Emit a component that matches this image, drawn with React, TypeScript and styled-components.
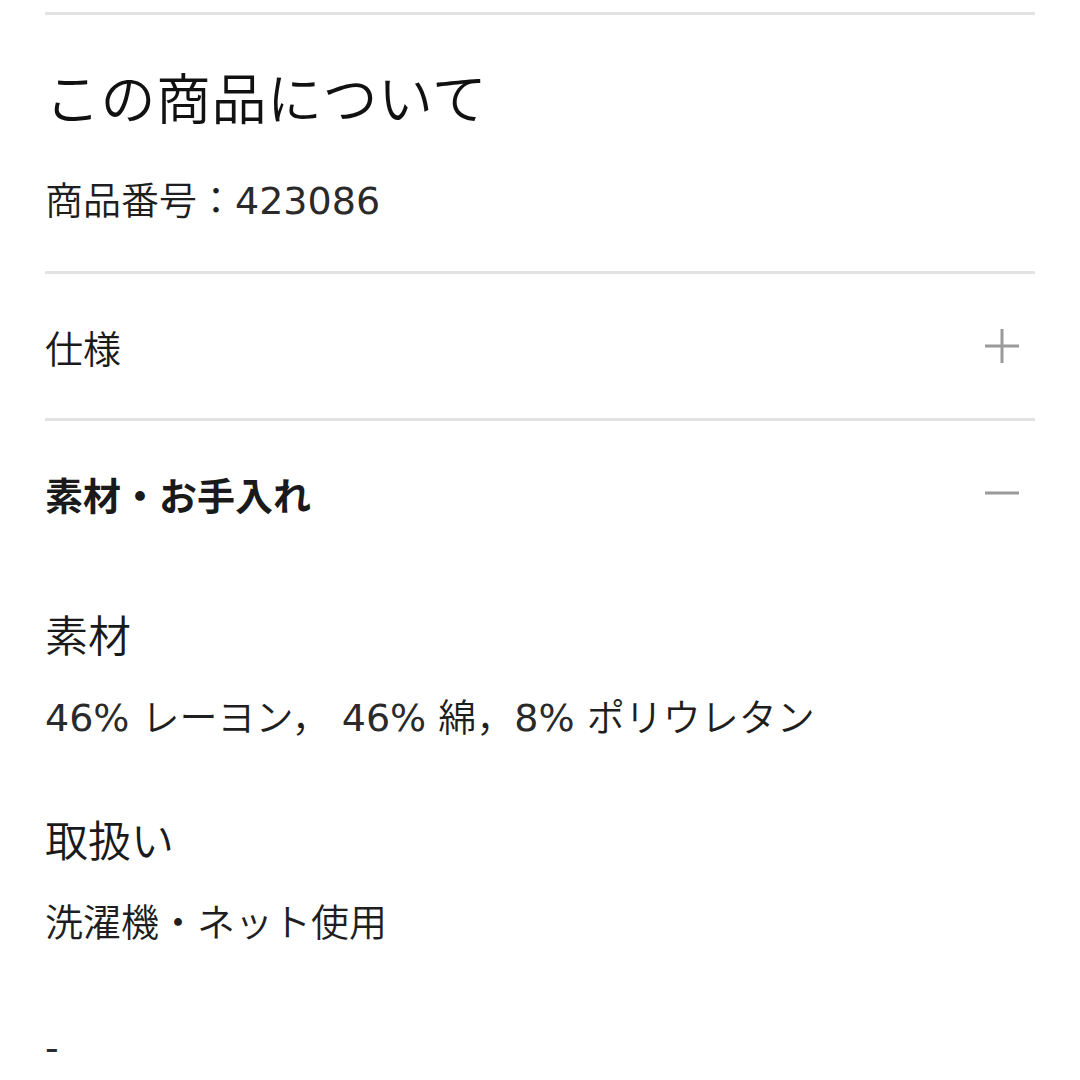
import styled, { createGlobalStyle } from 'styled-components';

const GlobalStyle = createGlobalStyle`
  html, body {
    margin: 0;
    padding: 0;
    background: #fff;
  }
  body {
    font-family: 'DejaVu Sans', 'Noto Sans CJK JP', sans-serif;
    font-weight: 350;
    color: #222;
  }
`;

const Page = styled.main`
  padding: 12px 45px 0;
`;

const AboutSection = styled.section`
  border-top: 3px solid #e2e2e2;
  padding: 47px 0 43px;
  display: flex;
  flex-direction: column;
  gap: 36px;
`;

const Title = styled.h2`
  margin: 0;
  font-size: 55px;
  font-weight: 350;
  letter-spacing: 0.5px;
  line-height: 1.4;
  color: #111;
`;

const BodyText = styled.p`
  margin: 0;
  font-size: 38px;
  font-weight: 350;
  line-height: 1.4;
  color: #1e1e1e;
`;

// digits and symbols: DejaVu only ships ExtraLight below 400, keep them regular
const Latin = styled.span`
  font-weight: 400;
  color: #2a2a2a;
`;

const AccordionItem = styled.div`
  border-top: 3px solid #e2e2e2;
`;

const AccordionHeader = styled.button<{ $open?: boolean }>`
  display: flex;
  align-items: center;
  justify-content: space-between;
  width: 100%;
  height: 144px;
  padding: 0;
  border: none;
  background: none;
  font-family: inherit;
  font-size: 38px;
  font-weight: ${(p) => (p.$open ? 700 : 350)};
  color: #1a1a1a;
  text-align: left;
  cursor: pointer;
`;

const IconBox = styled.span`
  display: flex;
  width: 34px;
  height: 34px;
  margin-right: 16px;
`;

const Details = styled.div`
  padding: 42px 0 0;
  display: flex;
  flex-direction: column;
`;

const DetailGroup = styled.div`
  display: flex;
  flex-direction: column;
  gap: 25px;
  & + & {
    margin-top: 66px;
  }
`;

const DetailLabel = styled.h3`
  margin: 0;
  font-size: 43px;
  font-weight: 350;
  line-height: 1.4;
  color: #1a1a1a;
`;

const Trailing = styled(BodyText)`
  margin-top: 72px;
`;

const Toggle = ({ open }: { open: boolean }) => (
  <IconBox>
    <svg width="34" height="34" viewBox="0 0 34 34">
      <line x1="0" y1="17" x2="34" y2="17" stroke="#9a9a9a" strokeWidth="3" />
      {!open && <line x1="17" y1="0" x2="17" y2="34" stroke="#9a9a9a" strokeWidth="3" />}
    </svg>
  </IconBox>
);

const withLatin = (text: string) =>
  text.split(/([0-9%-]+)/).map((part, i) =>
    /[0-9%-]/.test(part) ? <Latin key={i}>{part}</Latin> : part
  );

const details = [
  { label: '素材', value: '46% レーヨン， 46% 綿，8% ポリウレタン' },
  { label: '取扱い', value: '洗濯機・ネット使用' },
];

export default function App() {
  return (
    <>
      <GlobalStyle />
      <Page>
        <AboutSection>
          <Title>この商品について</Title>
          <BodyText>{withLatin('商品番号：423086')}</BodyText>
        </AboutSection>

        <AccordionItem>
          <AccordionHeader>
            仕様
            <Toggle open={false} />
          </AccordionHeader>
        </AccordionItem>

        <AccordionItem>
          <AccordionHeader $open>
            素材・お手入れ
            <Toggle open />
          </AccordionHeader>
          <Details>
            {details.map((d) => (
              <DetailGroup key={d.label}>
                <DetailLabel>{d.label}</DetailLabel>
                <BodyText>{withLatin(d.value)}</BodyText>
              </DetailGroup>
            ))}
            <Trailing>{withLatin('-')}</Trailing>
          </Details>
        </AccordionItem>
      </Page>
    </>
  );
}
